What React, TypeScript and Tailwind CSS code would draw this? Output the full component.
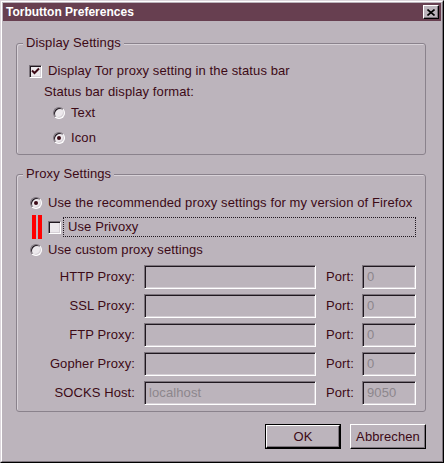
import type { ReactNode } from 'react';

const font = { fontFamily: '"Liberation Sans", Arial, sans-serif' };

function Checkbox({ checked }: { checked?: boolean }) {
  return (
    <div className="relative h-[13px] w-[13px] shrink-0 border border-t-[#7c747c] border-l-[#7c747c] border-b-white border-r-white bg-[#ece8ec] shadow-[inset_1px_1px_0_#201820,inset_-1px_-1px_0_#d6d0d6]">
      {checked && (
        <svg className="absolute left-[1px] top-[1px]" width="9" height="9" viewBox="0 0 9 9">
          <path d="M1 3.5 L3.5 6 L8 1.5" fill="none" stroke="#3c0a16" strokeWidth="2" />
        </svg>
      )}
    </div>
  );
}

function Radio({ checked }: { checked?: boolean }) {
  return (
    <div className="flex h-[12px] w-[12px] shrink-0 items-center justify-center rounded-full border border-t-[#7c747c] border-l-[#7c747c] border-b-white border-r-white bg-[#ece8ec] shadow-[inset_1px_1px_0_#201820,inset_-1px_-1px_0_#d6d0d6]">
      {checked && <div className="h-[4px] w-[4px] rounded-full bg-[#3c0a16]" />}
    </div>
  );
}

function Group({ title, children, className }: { title: string; children: ReactNode; className: string }) {
  return (
    <div className={`relative rounded-[3px] border border-[#8a828c] shadow-[inset_1px_1px_0_#d8d2d8] ${className}`}>
      <span className="absolute left-[6px] top-[-9px] bg-[#bcb4bc] px-[3px] text-[13px] leading-[16px]">
        {title}
      </span>
      {children}
    </div>
  );
}

function Field({ label, value, port }: { label: string; value?: string; port: string }) {
  return (
    <div className="flex h-[24px] items-center">
      <span className="w-[118px] text-right">{label}</span>
      <div className="ml-[9px] flex h-[24px] w-[172px] items-center border border-t-[#7c747c] border-l-[#7c747c] border-b-white border-r-white pl-[4px] text-[#8c868c] shadow-[inset_1px_1px_0_#201820,inset_-1px_-1px_0_#d6d0d6]">
        {value}
      </div>
      <span className="ml-[10px] w-[36px]">Port:</span>
      <div className="flex h-[24px] w-[54px] items-center border border-t-[#7c747c] border-l-[#7c747c] border-b-white border-r-white pl-[4px] text-[#8c868c] shadow-[inset_1px_1px_0_#201820,inset_-1px_-1px_0_#d6d0d6]">
        {port}
      </div>
    </div>
  );
}

export default function App() {
  return (
    <div
      style={font}
      className="h-[463px] w-[444px] border border-t-[#dcd6dc] border-l-[#dcd6dc] border-b-black border-r-black text-[13px] tracking-[0.1px] text-[#3c0a16]"
    >
      <div className="flex h-full flex-col border border-t-white border-l-white border-b-[#7c747c] border-r-[#7c747c] bg-[#bcb4bc]">
        {/* Title bar */}
        <div className="mx-[1px] mt-[1px] flex h-[18px] items-center justify-between bg-[#673f50] pl-[3px] pr-[2px]">
          <span className="text-[12px] font-bold leading-none tracking-normal text-white">Torbutton Preferences</span>
          <button className="flex h-[14px] w-[16px] items-center justify-center border border-t-white border-l-white border-b-black border-r-black bg-[#bcb4bc] shadow-[inset_-1px_-1px_0_#7c747c]">
            <svg width="8" height="7" viewBox="0 0 8 7">
              <path d="M0.5 0.5 L7.5 6.5 M7.5 0.5 L0.5 6.5" stroke="#000" strokeWidth="1.6" />
            </svg>
          </button>
        </div>

        <div className="flex flex-col pl-[14px] pr-[16px]">
          <Group title="Display Settings" className="mt-[22px] h-[112px] pl-[12px] pt-[19px]">
            <div className="flex h-[16px] items-center gap-[6px]">
              <Checkbox checked />
              <span>Display Tor proxy setting in the status bar</span>
            </div>
            <div className="ml-[15px] mt-[5px] flex h-[16px] items-center">Status bar display format:</div>
            <div className="ml-[24px] mt-[5px] flex h-[16px] items-center gap-[6px]">
              <Radio />
              <span>Text</span>
            </div>
            <div className="ml-[24px] mt-[9px] flex h-[16px] items-center gap-[6px]">
              <Radio checked />
              <span>Icon</span>
            </div>
          </Group>

          <Group title="Proxy Settings" className="mt-[19px] h-[238px] pt-[20px]">
            <div className="ml-[13px] flex h-[16px] items-center gap-[6px]">
              <Radio checked />
              <span>Use the recommended proxy settings for my version of Firefox</span>
            </div>
            <div className="mt-[4px] flex h-[24px] items-center">
              <div className="ml-[15px] h-[24px] w-[4px] bg-[#ff0000]" />
              <div className="ml-[2px] h-[24px] w-[4px] bg-[#ff0000]" />
              <div className="ml-[6px]">
                <Checkbox />
              </div>
              <div className="ml-[2px] flex h-[20px] w-[353px] items-center border border-dotted border-[#201820] pl-[4px]">
                Use Privoxy
              </div>
            </div>
            <div className="ml-[13px] mt-[3px] flex h-[16px] items-center gap-[6px]">
              <Radio />
              <span>Use custom proxy settings</span>
            </div>
            <div className="mt-[7px] flex flex-col gap-[5px]">
              <Field label="HTTP Proxy:" port="0" />
              <Field label="SSL Proxy:" port="0" />
              <Field label="FTP Proxy:" port="0" />
              <Field label="Gopher Proxy:" port="0" />
              <Field label="SOCKS Host:" value="localhost" port="9050" />
            </div>
          </Group>

          <div className="mt-[12px] flex justify-end gap-[9px]">
            <button className="h-[25px] w-[76px] border border-black">
              <div className="flex h-full w-full items-center justify-center border border-t-white border-l-white border-b-black border-r-black shadow-[inset_-1px_-1px_0_#7c747c]">
                OK
              </div>
            </button>
            <button className="flex h-[25px] w-[76px] items-center justify-center border border-t-white border-l-white border-b-black border-r-black shadow-[inset_-1px_-1px_0_#7c747c]">
              Abbrechen
            </button>
          </div>
        </div>
      </div>
    </div>
  );
}
